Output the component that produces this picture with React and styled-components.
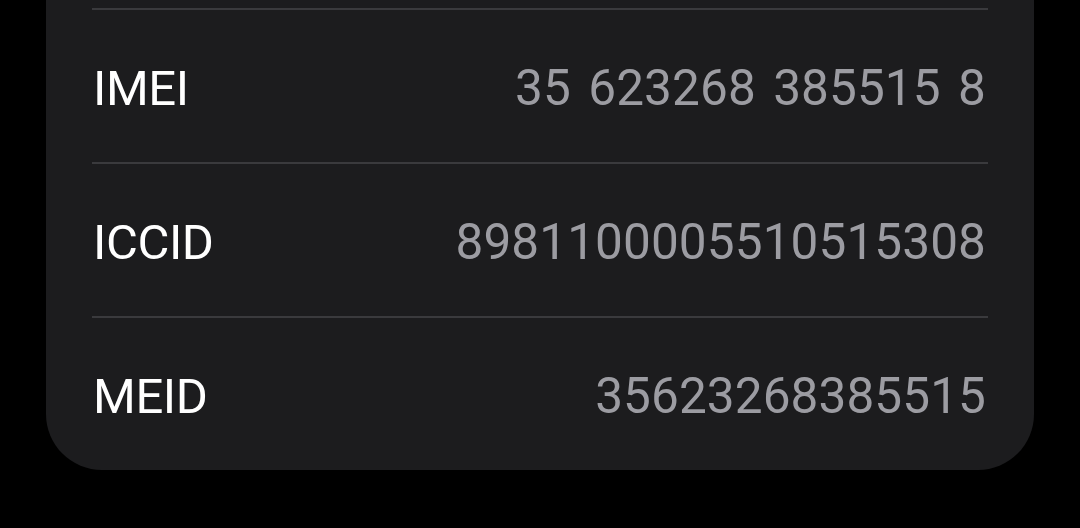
import React from 'react'
import styled, { createGlobalStyle } from 'styled-components'

const GlobalStyle = createGlobalStyle`
    html, body {
        margin: 0;
        padding: 0;
        background: #000;
    }
    body {
        font-family: Roboto, 'Liberation Sans', Arial, sans-serif;
        -webkit-font-smoothing: antialiased;
    }
`
const Page = styled.div`
    width: 1080px;
    height: 528px;
    overflow: hidden;
    background: #000;
`
const Card = styled.section`
    margin: 0 46px;
    padding-top: 8px;
    background: #1c1c1e;
    border-radius: 0 0 56px 56px;
    overflow: hidden;
`
const Row = styled.div`
    height: 152px;
    margin: 0 46px;
    padding: 0 2px 0 1px;
    display: flex;
    align-items: center;
    justify-content: space-between;
    border-top: 2px solid #3a3a3d;
`
const Label = styled.span`
    color: #ffffff;
    font-size: 49px;
    font-weight: 400;
    letter-spacing: -0.4px;
    padding-top: 4px;
`
const Value = styled.span`
    color: #9c9ca2;
    font-size: 49.5px;
    font-weight: 400;
    letter-spacing: 0.1px;
    word-spacing: 5px;
    padding-top: 4px;
`

const rows = [
    { label: 'IMEI', value: '35 623268 385515 8' },
    { label: 'ICCID', value: '8981100005510515308' },
    { label: 'MEID', value: '35623268385515' },
]

const App = () => (
    <Page>
        <GlobalStyle />
        <Card>
            {rows.map((row) => (
                <Row key={row.label}>
                    <Label>{row.label}</Label>
                    <Value>{row.value}</Value>
                </Row>
            ))}
        </Card>
    </Page>
)

export default App
